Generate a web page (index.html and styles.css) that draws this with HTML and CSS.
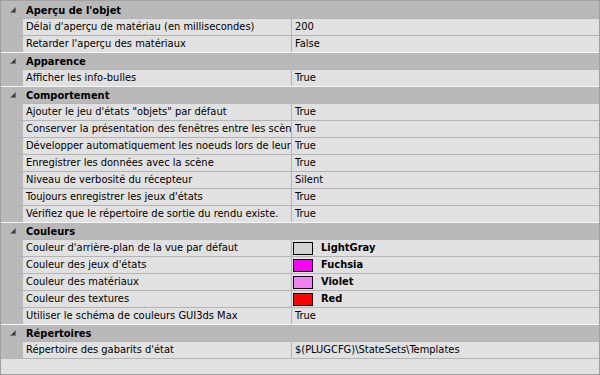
FILE: index.html
```html
<!DOCTYPE html>
<html lang="fr">
<head>
<meta charset="UTF-8">
<meta name="viewport" content="width=device-width, initial-scale=1.0">
<title>Options</title>
<link rel="stylesheet" href="styles.css">
</head>
<body>

<div class="grid">

  <!-- Aperçu de l'objet -->
  <div class="cat">
    <div class="cat-head">
      <span class="glyph"><svg width="6" height="6" viewBox="0 0 6 6"><polygon points="5.5,0.5 5.5,5.5 0.5,5.5" /></svg></span>
      <span class="cat-title">Aperçu de l'objet</span>
    </div>
    <div class="prop"><div class="gutter"></div><div class="name">Délai d'aperçu de matériau (en millisecondes)</div><div class="value">200</div></div>
    <div class="prop"><div class="gutter"></div><div class="name">Retarder l'aperçu des matériaux</div><div class="value">False</div></div>
  </div>

  <!-- Apparence -->
  <div class="cat">
    <div class="cat-head">
      <span class="glyph"><svg width="6" height="6" viewBox="0 0 6 6"><polygon points="5.5,0.5 5.5,5.5 0.5,5.5" /></svg></span>
      <span class="cat-title">Apparence</span>
    </div>
    <div class="prop"><div class="gutter"></div><div class="name">Afficher les info-bulles</div><div class="value">True</div></div>
  </div>

  <!-- Comportement -->
  <div class="cat">
    <div class="cat-head">
      <span class="glyph"><svg width="6" height="6" viewBox="0 0 6 6"><polygon points="5.5,0.5 5.5,5.5 0.5,5.5" /></svg></span>
      <span class="cat-title">Comportement</span>
    </div>
    <div class="prop"><div class="gutter"></div><div class="name">Ajouter le jeu d'états "objets" par défaut</div><div class="value">True</div></div>
    <div class="prop"><div class="gutter"></div><div class="name">Conserver la présentation des fenêtres entre les scènes</div><div class="value">True</div></div>
    <div class="prop"><div class="gutter"></div><div class="name">Développer automatiquement les noeuds lors de leur sélection</div><div class="value">True</div></div>
    <div class="prop"><div class="gutter"></div><div class="name">Enregistrer les données avec la scène</div><div class="value">True</div></div>
    <div class="prop"><div class="gutter"></div><div class="name">Niveau de verbosité du récepteur</div><div class="value">Silent</div></div>
    <div class="prop"><div class="gutter"></div><div class="name">Toujours enregistrer les jeux d'états</div><div class="value">True</div></div>
    <div class="prop"><div class="gutter"></div><div class="name">Vérifiez que le répertoire de sortie du rendu existe.</div><div class="value">True</div></div>
  </div>

  <!-- Couleurs -->
  <div class="cat">
    <div class="cat-head">
      <span class="glyph"><svg width="6" height="6" viewBox="0 0 6 6"><polygon points="5.5,0.5 5.5,5.5 0.5,5.5" /></svg></span>
      <span class="cat-title">Couleurs</span>
    </div>
    <div class="prop"><div class="gutter"></div><div class="name">Couleur d'arrière-plan de la vue par défaut</div><div class="value"><span class="swatch swatch-lightgray"></span><b class="color-name">LightGray</b></div></div>
    <div class="prop"><div class="gutter"></div><div class="name">Couleur des jeux d'états</div><div class="value"><span class="swatch swatch-fuchsia"></span><b class="color-name">Fuchsia</b></div></div>
    <div class="prop"><div class="gutter"></div><div class="name">Couleur des matériaux</div><div class="value"><span class="swatch swatch-violet"></span><b class="color-name">Violet</b></div></div>
    <div class="prop"><div class="gutter"></div><div class="name">Couleur des textures</div><div class="value"><span class="swatch swatch-red"></span><b class="color-name">Red</b></div></div>
    <div class="prop"><div class="gutter"></div><div class="name">Utiliser le schéma de couleurs GUI3ds Max</div><div class="value">True</div></div>
  </div>

  <!-- Répertoires -->
  <div class="cat">
    <div class="cat-head">
      <span class="glyph"><svg width="6" height="6" viewBox="0 0 6 6"><polygon points="5.5,0.5 5.5,5.5 0.5,5.5" /></svg></span>
      <span class="cat-title">Répertoires</span>
    </div>
    <div class="prop"><div class="gutter"></div><div class="name">Répertoire des gabarits d'état</div><div class="value">$(PLUGCFG)\StateSets\Templates</div></div>
  </div>

  <div class="grid-end"></div>
</div>

</body>
</html>
```

FILE: styles.css
```css
body {
  margin: 0;
  padding: 0;
  font-family: "DejaVu Sans Condensed", "DejaVu Sans", sans-serif;
  font-size: 11px;
  color: #000;
}

/* Property grid frame */
.grid {
  width: 600px;
  height: 375px;
  box-sizing: border-box;
  border: 1px solid #a0a0a0;
  background-color: #e1e1e1;
  overflow: hidden;
}

/* Category header */
.cat-head {
  display: flex;
  align-items: center;
  height: 16px;
  border-top: 1px solid #f4f4f4;
  background-color: #b9b9b9;
}

.cat:first-child .cat-head {
  border-top-color: #b9b9b9;
}

.glyph {
  width: 22px;
  display: flex;
  justify-content: center;
  padding-left: 2px;
  box-sizing: border-box;
}

.glyph svg polygon {
  fill: #3c3c3c;
  stroke: #6a6a6a;
  stroke-width: 0.6;
}

.cat-title {
  padding-left: 3px;
  font-weight: bold;
  white-space: nowrap;
}

/* Property rows */
.prop {
  display: flex;
  height: 16px;
  line-height: 16px;
  border-top: 1px solid #b4b4b4;
}

.gutter {
  width: 22px;
  flex: none;
  background-color: #b9b9b9;
}

.name {
  width: 269px;
  flex: none;
  padding-left: 3px;
  box-sizing: border-box;
  border-right: 1px solid #b4b4b4;
  white-space: nowrap;
  overflow: hidden;
}

.value {
  flex: 1;
  display: flex;
  align-items: center;
  padding-left: 3px;
  white-space: nowrap;
}

.swatch {
  width: 20px;
  height: 13px;
  margin-left: -2px;
  box-sizing: border-box;
  border: 1px solid #000;
}

.swatch-lightgray { background-color: #d3d3d3; }
.swatch-fuchsia { background-color: #ff00ff; }
.swatch-violet { background-color: #ee82ee; }
.swatch-red { background-color: #ff0000; }

.color-name {
  margin-left: 8px;
}

.grid-end {
  border-top: 1px solid #b4b4b4;
}
```
